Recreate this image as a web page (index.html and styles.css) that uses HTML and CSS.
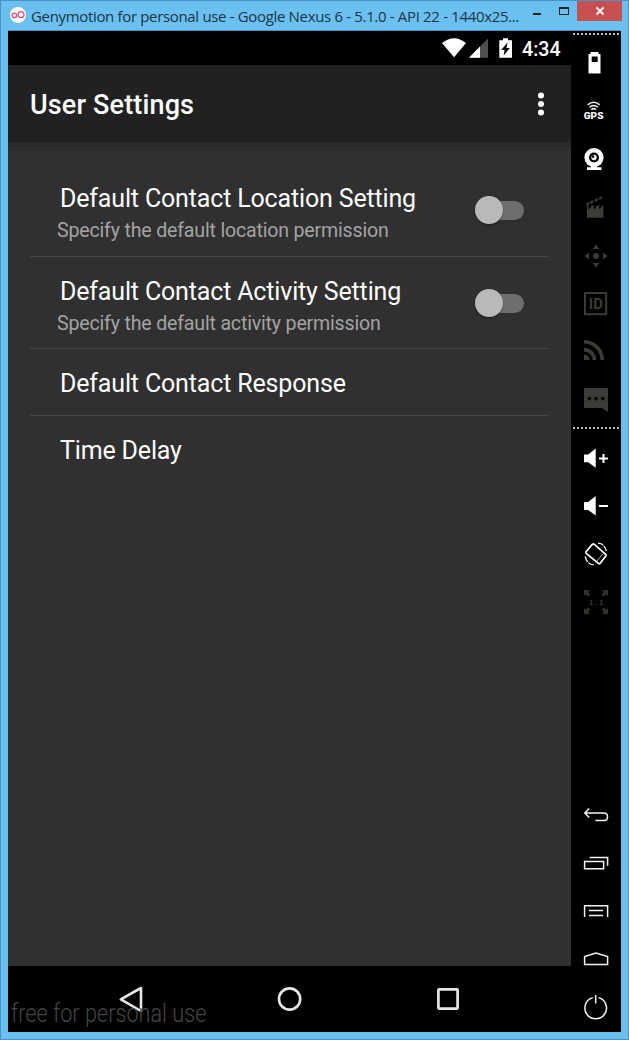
FILE: index.html
```html
<!DOCTYPE html>
<html lang="en">
<head>
<meta charset="utf-8">
<title>Genymotion - User Settings</title>
<link rel="stylesheet" href="styles.css">
</head>
<body>
<div class="window">
  <header class="titlebar">
    <svg class="logo" width="16" height="16" viewBox="0 0 16 16"><circle cx="8" cy="8" r="8" fill="#fff"/><g fill="none" stroke="#e8457c" stroke-width="1.2"><circle cx="4.3" cy="8.4" r="2.3"/><circle cx="11" cy="7.7" r="3"/></g></svg>
    <span class="caption">Genymotion for personal use - Google Nexus 6 - 5.1.0 - API 22 - 1440x25...</span>
    <svg class="controls" width="45" height="20" viewBox="0 0 45 20"><path d="M1 13h8" stroke="#222" stroke-width="2"/><path fill="#222" fill-rule="evenodd" d="M27 6h10v8H27zM28 8v5h8V8z"/></svg>
    <span class="close"><svg width="10" height="10" viewBox="0 0 10 10"><path d="M1.5 1.5l7 7M8.5 1.5l-7 7" stroke="#fff" stroke-width="1.8"/></svg></span>
  </header>
  <div class="device">
    <main class="screen">
      <div class="statusbar">
        <svg width="72" height="22" viewBox="0 0 72 22">
          <path fill="#fff" d="M0 5Q12-4.5 24 5L12 19.3z"/>
          <path fill="#505050" d="M46 .5v19.2H27z"/><path fill="#fff" d="M38 8.6v11.1H27z"/>
          <path fill="#fff" d="M61 .3h5v2h4v17.5H57.3V2.3H61z"/><path fill="#000" d="M65.6 4.5l-6.4 7.4h3.4l-1 5.6 6.2-7.4h-3.4z"/>
        </svg>
        <span class="clock">4:34</span>
      </div>
      <div class="appbar">
        <h1 class="heading">User Settings</h1>
        <svg class="more" width="8" height="24" viewBox="0 0 8 24" fill="#fff"><circle cx="4" cy="3.6" r="3"/><circle cx="4" cy="12" r="3"/><circle cx="4" cy="20.4" r="3"/></svg>
      </div>
      <div class="settings">
        <section class="row row-first">
          <div class="texts"><div class="name">Default Contact Location Setting</div><div class="hint">Specify the default location permission</div></div>
          <span class="switch"><span class="thumb"></span></span>
        </section>
        <section class="row">
          <div class="texts"><div class="name">Default Contact Activity Setting</div><div class="hint">Specify the default activity permission</div></div>
          <span class="switch"><span class="thumb"></span></span>
        </section>
        <section class="row row-short"><div class="name">Default Contact Response</div></section>
        <section class="row row-last"><div class="name">Time Delay</div></section>
      </div>
      <nav class="navbar">
        <svg width="24" height="28" viewBox="0 0 24 28"><path d="M1.8 14.3L22 3v23z" fill="none" stroke="#e6e6e6" stroke-width="2.6" stroke-linejoin="round"/></svg>
        <svg width="26" height="26" viewBox="0 0 26 26"><circle cx="12.6" cy="13" r="10.6" fill="none" stroke="#e6e6e6" stroke-width="2.6"/></svg>
        <svg width="22" height="22" viewBox="0 0 22 22"><rect x="1.4" y="1.4" width="19.2" height="19.2" rx=".8" fill="none" stroke="#e6e6e6" stroke-width="2.7"/></svg>
        <span class="watermark">free for personal use</span>
      </nav>
    </main>
    <aside class="toolbar">
      <div class="dots"></div>
      <div class="group">
        <svg class="tool" viewBox="0 0 50 48"><path fill="#fff" fill-rule="evenodd" d="M19.5 13h8v2h2v19.6h-12V15h2zM20.7 17.4v5.6h6v-5.6z"/></svg>
        <svg class="tool" viewBox="0 0 50 48"><g fill="none" stroke="#eee" stroke-width="1.5"><path d="M16.6 17.8q6-5 12 0M18.4 20.3q4.2-3.6 8.4 0M20.2 22.7q2.4-2.2 4.8 0"/></g><text class="gps" x="12.8" y="31.8" textLength="19.6" lengthAdjust="spacingAndGlyphs">GPS</text></svg>
        <svg class="tool" viewBox="0 0 50 48"><path fill="#fff" d="M20 30h6v2.3h4.4V35H16v-2.7h4z"/><circle cx="23" cy="22.5" r="9.6" fill="#fff"/><circle cx="23" cy="22.5" r="5" fill="#000"/><circle cx="23" cy="22.5" r="2.7" fill="#fff"/><circle cx="22" cy="21.6" r="1.3" fill="#000"/></svg>
        <svg class="tool" viewBox="0 0 50 48"><path fill="#3b3b37" d="M16 25.4h16.4v9.3H16zM16 22.6h2.4l-1.4 2.8H16zM20.6 22.6h3l-1.6 2.8h-3zM25.8 22.6h3l-1.6 2.8h-3zM31 22.6h1.4v2.8h-3zM15 20.2l2.8-1.2.8 2.2-2.8 1.2zM19.4 18.2l3-1.3-.4 2.9-3 1.3zM24 16.2l3-1.3-.4 2.9-3 1.3zM28.4 14.2l2-.9.8 2.1-3.2 1.5z"/></svg>
        <svg class="tool" viewBox="0 0 50 48" fill="#3b3b37"><circle cx="25" cy="25" r="3"/><path d="M25 13.2l3.3 4.8h-6.6zM25 36.8l3.3-4.8h-6.6zM13 25l5.2-3.3v6.6zM37 25l-5.2-3.3v6.6z"/></svg>
        <svg class="tool" viewBox="0 0 50 48"><rect x="14" y="14" width="21.2" height="21.2" fill="none" stroke="#3b3b37" stroke-width="2"/><text class="ident" x="17.8" y="30.2" textLength="14" lengthAdjust="spacingAndGlyphs">ID</text></svg>
        <svg class="tool" viewBox="0 0 50 48"><path fill="#3b3b37" d="M13 27.4a5.6 5.6 0 0 1 5.6 5.6H13z"/><path d="M13 22.6A10.4 10.4 0 0 1 23.4 33M13 14.8A18.2 18.2 0 0 1 31.2 33" fill="none" stroke="#3b3b37" stroke-width="3.6"/></svg>
        <svg class="tool" viewBox="0 0 50 48"><path fill="#3b3b37" d="M13 13h24v24l-6-4H13z"/><circle cx="18.4" cy="23.6" r="1.9"/><circle cx="25.1" cy="23.6" r="1.9"/><circle cx="31.8" cy="23.6" r="1.9"/></svg>
      </div>
      <div class="dots"></div>
      <div class="group group-view">
        <svg class="tool" viewBox="0 0 50 48"><path fill="#fff" d="M13 20.4h4.2l7.5-6v19.4l-7.5-5.5H13z"/><path d="M28 24.5h9M32.5 20v9" stroke="#fff" stroke-width="2"/></svg>
        <svg class="tool" viewBox="0 0 50 48"><path fill="#fff" d="M13 20h4.2l7.5-6v19.4l-7.5-5.5H13z"/><path d="M28 24h9" stroke="#fff" stroke-width="2"/></svg>
        <svg class="tool" viewBox="0 0 50 48"><g fill="none" stroke="#fff"><path d="M21.5 14.2Q22.3 13.4 23.3 14.3L34.7 24.4Q35.5 25.2 34.8 26.1L29.2 33.2Q28.4 34.2 27.4 33.4L15.2 23.3Q14.4 22.5 15.2 21.5z" stroke-width="1.7"/><path d="M26 31l5.8-7" stroke-width=".7"/><path d="M27 13.2Q33.5 13.4 35.3 21M22.8 35Q16 34.4 14.2 26.5" stroke-width="1.2" stroke-dasharray="6 1"/></g></svg>
        <svg class="tool" viewBox="0 0 50 48"><path fill="#34342f" d="M13 12h6l-2 2 2.2 2.5-2 2-2.4-2.3L13 18zM37 12h-6l2 2-2.2 2.5 2 2 2.4-2.3L37 18zM13 36h6l-2-2 2.2-2.5-2-2-2.4 2.3L13 30zM37 36h-6l2-2-2.2-2.5 2-2 2.4 2.3L37 30z"/><text class="ratio" x="18" y="27.2" textLength="14.5">1:1</text></svg>
      </div>
      <div class="group group-keys">
        <svg class="tool line" viewBox="0 0 50 48"><path d="M18.2 17.5L13.8 22l4.4 4.6M13.8 22H33q3.5 0 3.5 3.8T33 29.5h-8.6"/></svg>
        <svg class="tool line" viewBox="0 0 50 48"><path d="M13.6 22.5h19v7.2h-19zM18.6 18.5h18v8.3"/></svg>
        <svg class="tool line" viewBox="0 0 50 48"><path d="M13.6 30V18.7h23V30M18 23.5h14M18 28.5h14"/></svg>
        <svg class="tool line" viewBox="0 0 50 48"><path d="M13.6 29.5v-8L25 18l11.6 3.5v8z"/></svg>
        <svg class="tool line" viewBox="0 0 50 48"><path d="M21.8 14.6a10.8 10.8 0 1 0 5.8 0M24.7 12v8.6"/></svg>
      </div>
    </aside>
  </div>
</div>
</body>
</html>
```
FILE: styles.css
```css
* { box-sizing: border-box; }
body { margin: 0; }
svg { display: block; flex: none; }

.window {
  width: 629px;
  height: 1040px;
  display: flex;
  flex-direction: column;
  padding: 0 7px 7px;
  background: #69c0f1;
  border: 1px solid #4b94bd;
  font-family: Roboto, "Liberation Sans", sans-serif;
}

.titlebar {
  height: 30px;
  flex: none;
  display: flex;
  align-items: flex-start;
}
.logo { margin: 6px 0 0 2px; }
.caption {
  width: 502px;
  flex: none;
  padding: 4px 0 0 5px;
  font: 15px/22px "Open Sans", "Noto Sans", sans-serif;
  letter-spacing: -0.335px;
  color: #1d3443;
  white-space: nowrap;
}
.controls { margin-left: 4px; }
.close {
  width: 45px;
  height: 20px;
  margin: 0 -1px 0 auto;
  display: flex;
  flex: none;
  align-items: center;
  justify-content: center;
  background: #c75050;
}

.device {
  flex: 1;
  display: flex;
  background: #000;
  border-top: 1px solid #4b94bd;
  margin-top: -1px;
}
.screen {
  width: 563px;
  display: flex;
  flex-direction: column;
}

.statusbar {
  height: 34px;
  display: flex;
  justify-content: flex-end;
  align-items: flex-start;
  padding: 7px 11px 0 0;
  color: #fff;
}
.clock {
  width: 38px;
  margin: 1px 0 0 8px;
  font-size: 19.6px;
  font-weight: 500;
  line-height: 22px;
}

.appbar {
  height: 77px;
  display: flex;
  justify-content: space-between;
  align-items: center;
  padding: 2px 26px 0 22px;
  background: #212121;
}
.more { margin-top: -2px; }
.heading {
  margin: 1px 0 0;
  font-size: 27px;
  font-weight: 500;
  line-height: 32px;
  letter-spacing: 0.15px;
  color: #fff;
}

.settings {
  flex: 1;
  padding: 22px 22px 0;
  background: linear-gradient(#272727, #303030 9px);
}
.row {
  height: 92px;
  display: flex;
  justify-content: space-between;
  border-bottom: 1px solid #464646;
  padding: 19px 25px 0 27px;
}
.row-first { height: 93px; }
.row-short { height: 67px; }
.row-last { border: 0; }
.name {
  font-size: 25px;
  line-height: 32px;
  letter-spacing: -0.16px;
  color: #fff;
  white-space: nowrap;
  padding-left: 3px;
}
.hint {
  font-size: 19.6px;
  line-height: 32px;
  letter-spacing: -0.19px;
  color: #a3a3a3;
  white-space: nowrap;
}
.switch {
  width: 45px;
  height: 19px;
  margin-top: 18px;
  display: flex;
  align-items: center;
  flex: none;
  border-radius: 10px;
  background: #6e6e6e;
}
.thumb {
  width: 28px;
  height: 28px;
  margin: -2px 0 0 -4px;
  flex: none;
  border-radius: 50%;
  background: #b9b9b9;
  box-shadow: 0 1px 2px rgba(0, 0, 0, 0.4);
}

.navbar {
  position: relative;
  height: 66px;
  display: flex;
  align-items: center;
  justify-content: space-between;
  padding: 0 112px 0 111px;
  background: #000;
}
.watermark {
  position: absolute;
  left: 3px;
  bottom: 3px;
  font-size: 25px;
  font-weight: 300;
  line-height: 30px;
  color: #454545;
  white-space: nowrap;
  transform: scaleX(0.867);
  transform-origin: left;
}

.toolbar {
  width: 50px;
  display: flex;
  flex-direction: column;
  padding: 2px 0 1px;
}
.dots {
  height: 2px;
  flex: none;
  margin: 0 2px;
  background: repeating-linear-gradient(90deg, #c4c4c4 0 2px, transparent 2px 4px);
}
.group { padding: 4px 0; }
.group-view { padding-top: 5px; }
.group-keys { margin-top: auto; padding: 0; }
.tool { width: 50px; height: 48px; }
.line { fill: none; stroke: #f2f2f2; stroke-width: 1.5; }
.gps { font: 900 9px Roboto, sans-serif; fill: #fff; }
.ident { font: 700 15px Roboto, sans-serif; fill: #3b3b37; }
.ratio { font: 700 8px "Liberation Sans", sans-serif; fill: #3b3b37; }
```
